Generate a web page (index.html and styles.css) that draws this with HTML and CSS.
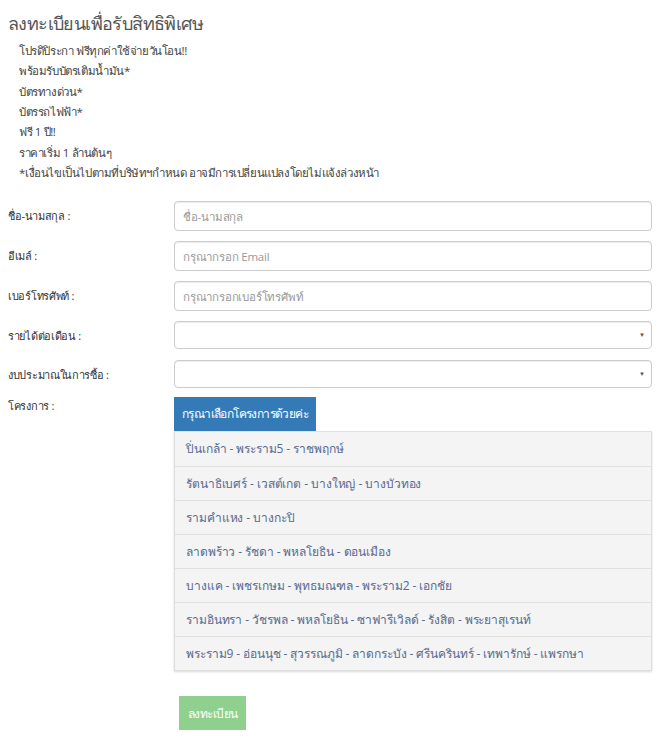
FILE: index.html
```html
<!DOCTYPE html>
<html lang="th">
<head>
<meta charset="utf-8">
<link rel="stylesheet" href="styles.css">
</head>
<body>
<h2 class="title">ลงทะเบียนเพื่อรับสิทธิพิเศษ</h2>
<ul class="promo">
  <li>โปรดิปิระกา ฟรีทุกค่าใช้จ่ายวันโอน!!</li>
  <li>พร้อมรับบัตรเติมน้ำมัน*</li>
  <li>บัตรทางด่วน*</li>
  <li>บัตรรถไฟฟ้า*</li>
  <li>ฟรี 1 ปี!!</li>
  <li>ราคาเริ่ม 1 ล้านต้นๆ</li>
  <li>*เงื่อนไขเป็นไปตามที่บริษัทฯกำหนด อาจมีการเปลี่ยนแปลงโดยไม่แจ้งล่วงหน้า</li>
</ul>
<form class="form">
  <div class="row">
    <label class="lbl">ชื่อ-นามสกุล :</label>
    <input class="ctl" type="text" placeholder="ชื่อ-นามสกุล">
  </div>
  <div class="row">
    <label class="lbl">อีเมล์ :</label>
    <input class="ctl" type="text" placeholder="กรุณากรอก Email">
  </div>
  <div class="row">
    <label class="lbl">เบอร์โทรศัพท์ :</label>
    <input class="ctl" type="text" placeholder="กรุณากรอกเบอร์โทรศัพท์">
  </div>
  <div class="row row-sel">
    <label class="lbl">รายได้ต่อเดือน :</label>
    <div class="sel"><span class="caret">▼</span></div>
  </div>
  <div class="row row-sel row-sel-last">
    <label class="lbl">งบประมาณในการซื้อ :</label>
    <div class="sel"><span class="caret">▼</span></div>
  </div>
  <div class="row row-proj">
    <label class="lbl">โครงการ :</label>
    <div class="proj">
      <div class="proj-btn">กรุณาเลือกโครงการด้วยค่ะ</div>
      <ul class="proj-list">
        <li>ปิ่นเกล้า - พระราม5 - ราชพฤกษ์</li>
        <li>รัตนาธิเบศร์ - เวสต์เกต - บางใหญ่ - บางบัวทอง</li>
        <li>รามคำแหง - บางกะปิ</li>
        <li>ลาดพร้าว - รัชดา - พหลโยธิน - ดอนเมือง</li>
        <li>บางแค - เพชรเกษม - พุทธมณฑล - พระราม2 - เอกชัย</li>
        <li>รามอินทรา - วัชรพล - พหลโยธิน - ซาฟารีเวิลด์ - รังสิต - พระยาสุเรนท์</li>
        <li>พระราม9 - อ่อนนุช - สุวรรณภูมิ - ลาดกระบัง - ศรีนครินทร์ - เทพารักษ์ - แพรกษา</li>
      </ul>
    </div>
  </div>
  <div class="submit-row">
    <button class="submit" type="button">ลงทะเบียน</button>
  </div>
</form>
</body>
</html>
```
FILE: styles.css
```css
html, body {
  margin: 0;
  padding: 0;
  background: #fff;
}
body {
  padding: 8px;
  font-family: "Open Sans", "Noto Sans", sans-serif;
  color: #333;
  font-size: 12px;
}
.title {
  margin: 2px 0 0 0;
  font-size: 18px;
  letter-spacing: -0.6px;
  font-weight: normal;
  color: #555;
  line-height: 26px;
}
.promo {
  list-style: none;
  margin: 5px 0 0 11px;
  padding: 0;
  color: #444;
  font-size: 11.5px;
  letter-spacing: -0.4px;
}
.promo li {
  line-height: 20.33px;
}
.form {
  margin-top: 18px;
  width: 644px;
}
.row {
  display: grid;
  grid-template-columns: 166px 478px;
  align-items: start;
  margin-bottom: 10px;
}
.row-sel {
  margin-bottom: 11px;
}
.row-sel-last {
  margin-bottom: 9px;
}
.lbl {
  font-size: 11px;
  letter-spacing: -0.3px;
  color: #333;
  padding-top: 6px;
  line-height: 18px;
}
.ctl {
  box-sizing: border-box;
  height: 30px;
  width: 478px;
  margin: 0;
  padding: 0 8px;
  border: 1px solid #ccc;
  border-radius: 4px;
  box-shadow: inset 0 1px 1px rgba(0,0,0,.075);
  font-family: inherit;
  font-size: 11.5px;
  letter-spacing: -0.2px;
  color: #555;
  outline: none;
}
.ctl::placeholder {
  color: #999;
}
.sel {
  box-sizing: border-box;
  height: 28px;
  border: 1px solid #ccc;
  border-radius: 4px;
  box-shadow: inset 0 1px 1px rgba(0,0,0,.075);
  display: flex;
  align-items: center;
  justify-content: flex-end;
  padding-right: 6px;
}
.caret {
  font-size: 6px;
  color: #555;
}
.row-proj {
  margin-bottom: 0;
}
.row-proj .lbl {
  padding-top: 0;
}
.proj-btn {
  display: inline-block;
  background: #337ab7;
  color: #fff;
  font-size: 12px;
  letter-spacing: -0.6px;
  height: 34px;
  line-height: 33px;
  padding: 0 8px;
  box-sizing: border-box;
  min-width: 121px;
  white-space: nowrap;
}
.proj-list {
  list-style: none;
  margin: 0;
  padding: 0;
  background: #f4f4f4;
  border: 1px solid #ddd;
  border-top: 1px solid #e2e2e2;
  box-shadow: 0 1px 2px rgba(0,0,0,.15);
}
.proj-list li {
  height: 34px;
  line-height: 33px;
  padding: 0 11px;
  box-sizing: border-box;
  border-top: 1px solid #e0e0e0;
  color: #566a92;
  font-size: 12px;
  letter-spacing: -0.1px;
}
.proj-list li:first-child {
  border-top: none;
}
.submit-row {
  padding: 25px 0 0 171px;
}
.submit {
  background: #8fd08f;
  border: none;
  color: #fff;
  font-family: inherit;
  font-size: 12px;
  letter-spacing: -0.5px;
  height: 34px;
  width: 67px;
  padding: 0;
}
```
